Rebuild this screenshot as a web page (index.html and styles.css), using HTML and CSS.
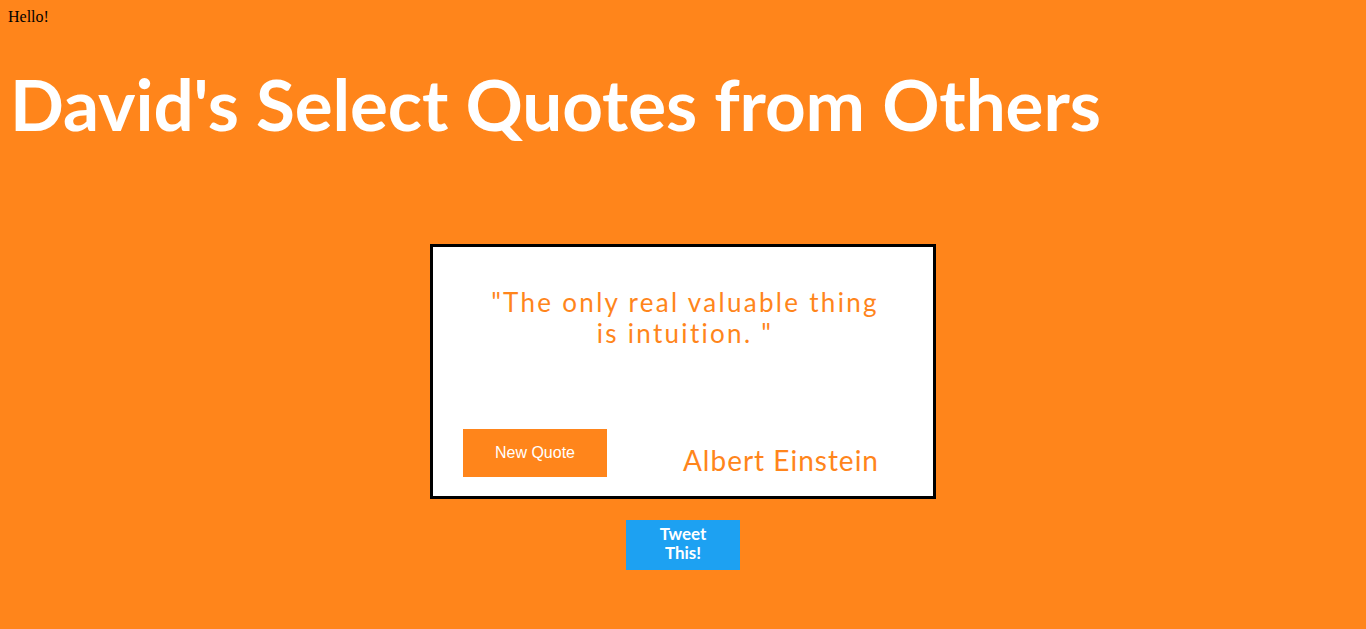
FILE: index.html
```html
<!DOCTYPE html>
<html>
<head>
<meta charset="utf-8">
<link rel="stylesheet" href="styles.css">
</head>
<body>
<div class="hello">Hello!</div>
<h1 class="title">David's Select Quotes from Others</h1>
<main class="stage">
  <section class="card">
    <p class="quote">"The only real valuable thing is intuition. "</p>
    <div class="card-foot">
      <button class="new-quote">New Quote</button>
      <span class="author">Albert Einstein</span>
    </div>
  </section>
  <button class="tweet">Tweet<br>This!</button>
</main>
</body>
</html>
```
FILE: styles.css
```css
html, body {
  height: 100%;
}
body {
  margin: 8px;
  background: #ff851b;
  font-family: "Liberation Serif", serif;
  font-size: 16px;
}
.hello {
  line-height: 18px;
}
.title {
  margin: 33px 0 0 2px;
  font-family: Lato, sans-serif;
  font-weight: 700;
  font-size: 71px;
  letter-spacing: -0.1px;
  line-height: 90px;
  color: #fff;
}
.stage {
  display: flex;
  flex-direction: column;
  align-items: center;
  margin-top: 95px;
}
.card {
  box-sizing: border-box;
  width: 506px;
  height: 255px;
  border: 3px solid #000;
  background: #fff;
  display: flex;
  flex-direction: column;
  justify-content: space-between;
  padding: 40px 54px 19px 30px;
}
.quote {
  width: 400px;
  margin: 0 0 0 22px;
  font-family: Lato, sans-serif;
  font-size: 26px;
  line-height: 31px;
  letter-spacing: 2.3px;
  text-align: center;
  color: #ff851b;
}
.card-foot {
  display: flex;
  align-items: center;
  justify-content: space-between;
}
.new-quote {
  width: 144px;
  height: 48px;
  border: none;
  background: #ff851b;
  color: #fff;
  font-family: "Liberation Sans", Arial, sans-serif;
  font-size: 16px;
  padding: 0;
}
.author {
  font-family: Lato, sans-serif;
  font-size: 28px;
  letter-spacing: 1px;
  color: #ff851b;
  padding-top: 14px;
}
.tweet {
  margin-top: 21px;
  width: 114px;
  height: 50px;
  border: none;
  background: #1da1f2;
  color: #fff;
  font-family: Lato, sans-serif;
  font-weight: 700;
  font-size: 17px;
  line-height: 19px;
  padding: 0 0 4px;
}
```
